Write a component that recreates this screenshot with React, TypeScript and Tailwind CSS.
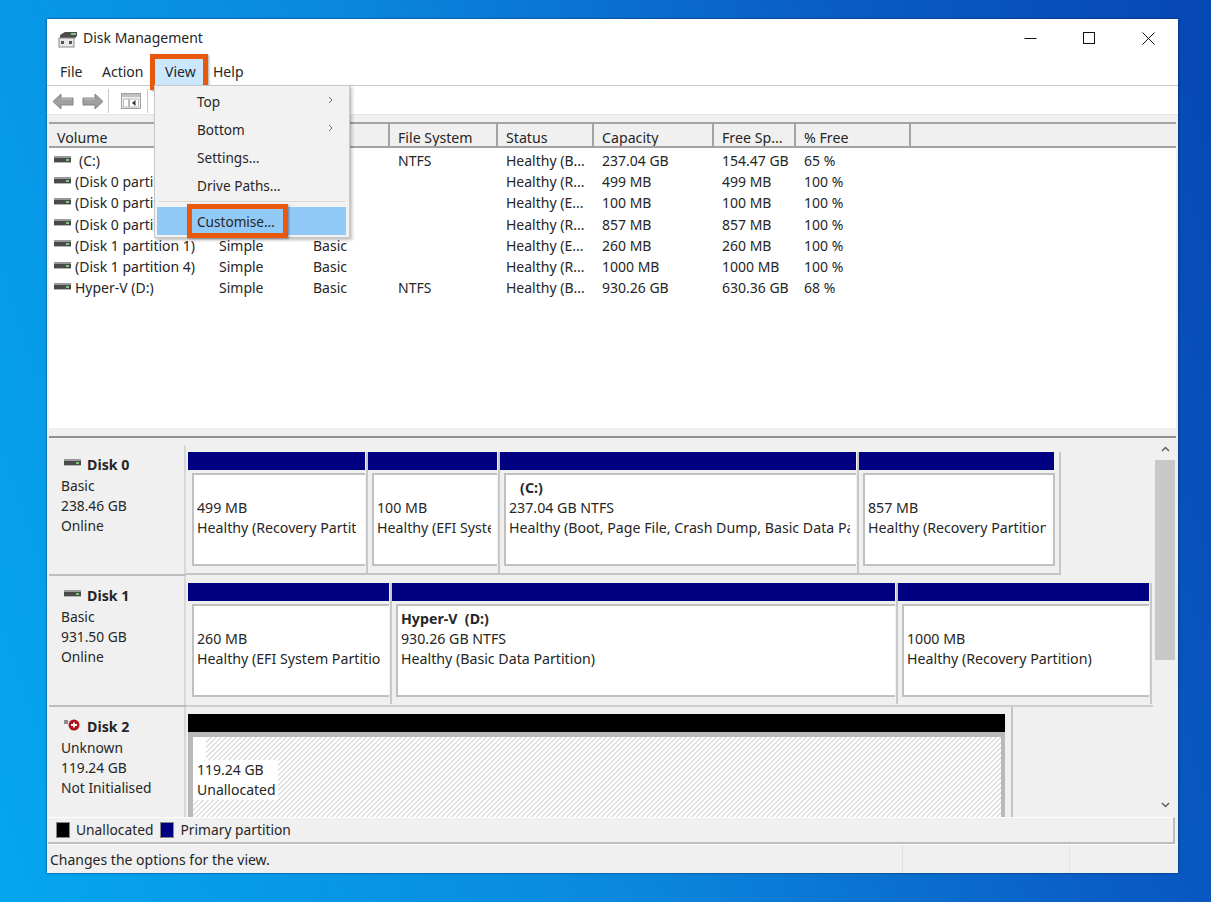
import React from "react";

const cols = "grid grid-cols-[162px_94px_85px_108px_96px_120px_82px_115px_1fr]";

const headers = ["Volume", "Layout", "Type", "File System", "Status", "Capacity", "Free Sp...", "% Free", ""];

const rows = [
  [" (C:)", "Simple", "Basic", "NTFS", "Healthy (B...", "237.04 GB", "154.47 GB", "65 %"],
  ["(Disk 0 partition 2)", "Simple", "Basic", "", "Healthy (R...", "499 MB", "499 MB", "100 %"],
  ["(Disk 0 partition 3)", "Simple", "Basic", "", "Healthy (E...", "100 MB", "100 MB", "100 %"],
  ["(Disk 0 partition 4)", "Simple", "Basic", "", "Healthy (R...", "857 MB", "857 MB", "100 %"],
  ["(Disk 1 partition 1)", "Simple", "Basic", "", "Healthy (E...", "260 MB", "260 MB", "100 %"],
  ["(Disk 1 partition 4)", "Simple", "Basic", "", "Healthy (R...", "1000 MB", "1000 MB", "100 %"],
  ["Hyper-V (D:)", "Simple", "Basic", "NTFS", "Healthy (B...", "930.26 GB", "630.36 GB", "68 %"],
];

const menuItems: { label: string; sub: boolean }[] = [
  { label: "Top", sub: true },
  { label: "Bottom", sub: true },
  { label: "Settings…", sub: false },
  { label: "Drive Paths…", sub: false },
];

function Drive({ className = "" }: { className?: string }) {
  return (
    <svg width="17" height="7" viewBox="0 0 17 7" className={className}>
      <rect x="0" y="0" width="17" height="2" fill="#9a9a9a" />
      <rect x="0" y="2" width="17" height="4" fill="#4a4a4a" />
      <rect x="0" y="6" width="17" height="1" fill="#b5b5b5" />
      <rect x="12" y="3" width="3" height="2" fill="#7fc77f" />
    </svg>
  );
}

function Partition({
  width,
  name,
  size,
  status,
  last = false,
  wide = false,
}: {
  width: string;
  name?: React.ReactNode;
  size: string;
  status: string;
  last?: boolean;
  wide?: boolean;
}) {
  return (
    <div className={`${width} h-[121px] shrink-0 flex flex-col border-r-2 border-[#c8c8c8]`}>
      <div className={`h-[18px] ${last ? "mr-[5px]" : "mr-[1px]"} bg-[#000080] shrink-0`} />
      <div
        className={`mt-[3px] ml-[4px] ${last ? "mr-[4px] border-r-2 pr-[7px]" : wide ? "mr-[1px] pr-[6px]" : "mr-[1px] pr-[9px]"} h-[93px] bg-white border-l-2 border-t-2 border-b-2 border-[#c0c0c0] pt-[3px] pl-[3px]`}
      >
        <div className="h-[20px] leading-[20px] font-bold whitespace-pre">{name}</div>
        <div className="h-[20px] leading-[20px] whitespace-nowrap overflow-hidden">{size}</div>
        <div className="h-[20px] leading-[20px] whitespace-nowrap overflow-hidden">{status}</div>
      </div>
    </div>
  );
}

function DiskLabel({
  icon,
  name,
  lines,
}: {
  icon: React.ReactNode;
  name: string;
  lines: string[];
}) {
  return (
    <div className="w-[137px] shrink-0 border-r-2 border-[#d8d8d8] pl-[12px] pt-[8px]">
      <div className="flex items-center h-[23px]">
        <div className="w-[26px] pl-[3px] flex items-center h-[14px] -mt-[4px]">{icon}</div>
        <span className="font-bold">{name}</span>
      </div>
      {lines.map((l) => (
        <div key={l} className="h-[20px] leading-[20px] text-[13.8px] whitespace-nowrap">
          {l}
        </div>
      ))}
    </div>
  );
}

export default function App() {
  return (
    <div className="w-[1211px] h-[902px] overflow-hidden pt-[19px] pl-[47px] bg-[linear-gradient(72deg,#05a6f0_0%,#0a88de_42%,#0a5cc4_75%,#0647b3_100%)] text-[14.2px] text-[#262626] [font-family:'Noto_Sans','Open_Sans',sans-serif]">
      <div className="relative w-[1131px] h-[854px] flex flex-col bg-[#f0f0f0] shadow-[0_0_2px_rgba(0,20,60,0.8)]">
        {/* Title bar */}
        <div className="h-[39px] shrink-0 bg-white flex items-center pl-[11px]">
          <svg width="20" height="18" viewBox="0 0 20 18">
            <path d="M2 5 L7 2 H19 V6 L17 8 H2 Z" fill="#4c4c4c" />
            <rect x="13" y="3" width="5" height="2" fill="#7fc77f" />
            <rect x="1" y="8" width="15" height="9" fill="#e9e9e9" stroke="#8a8a8a" />
            <rect x="3" y="11" width="3" height="3" fill="#555" />
            <rect x="11" y="11" width="3" height="3" fill="#555" />
          </svg>
          <span className="ml-[5px] -mt-[3px] text-[14px]">Disk Management</span>
          <div className="ml-auto flex items-center pr-[23px] gap-[46px] -mt-[1px]">
            <svg width="13" height="12" viewBox="0 0 13 12">
              <path d="M0.5 6.5H12.5" stroke="#111" strokeWidth="1" />
            </svg>
            <svg width="12" height="12" viewBox="0 0 12 12">
              <rect x="0.5" y="0.5" width="11" height="11" fill="none" stroke="#111" strokeWidth="1" />
            </svg>
            <svg width="13" height="13" viewBox="0 0 13 13" className="ml-[1px]">
              <path d="M0.5 0.5L12.5 12.5M12.5 0.5L0.5 12.5" stroke="#111" strokeWidth="1" />
            </svg>
          </div>
        </div>

        {/* Menu bar */}
        <div className="h-[28px] shrink-0 bg-white border-b border-[#c9c9c9] flex items-center pl-[13px] text-[14px]">
          <span className="w-[42px]">File</span>
          <span className="w-[63px]">Action</span>
          <span className="w-[48px] relative">
            <span className="absolute -left-[15px] -top-[7px] w-[58px] h-[36px] border-[5px] border-[#e8590c] bg-[#cce8ff] shadow-[1px_1px_2px_rgba(0,0,0,0.35)]" />
            <span className="relative">View</span>
          </span>
          <span>Help</span>
        </div>

        {/* Toolbar */}
        <div className="h-[28px] shrink-0 bg-white flex items-center pl-[5px] pt-[2px]">
          <svg width="22" height="17" viewBox="0 0 22 17">
            <path d="M1 8.5 L9 1 V5 H21 V12 H9 V16 Z" fill="#9f9f9f" stroke="#858585" />
            <path d="M9 6 H20" stroke="#c4c4c4" />
          </svg>
          <svg width="22" height="17" viewBox="0 0 22 17" className="ml-[8px]">
            <path d="M21 8.5 L13 1 V5 H1 V12 H13 V16 Z" fill="#9f9f9f" stroke="#858585" />
            <path d="M2 6 H13" stroke="#c4c4c4" />
          </svg>
          <div className="w-px h-[24px] bg-[#c8c8c8] ml-[4px]" />
          <svg width="20" height="16" viewBox="0 0 20 16" className="ml-[12px]">
            <rect x="0.5" y="0.5" width="19" height="15" fill="#f2f2f2" stroke="#a0a0a0" />
            <rect x="1" y="1" width="18" height="3" fill="#c0c0c0" />
            <rect x="2.5" y="6" width="5" height="8" fill="#fff" stroke="#a0a0a0" strokeWidth="0.7" />
            <rect x="8.5" y="6" width="9" height="8" fill="#fff" stroke="#a0a0a0" strokeWidth="0.7" />
            <path d="M14.5 7 L11 10 L14.5 13 Z" fill="#333" />
          </svg>
          <div className="w-px h-[24px] bg-[#c8c8c8] ml-[6px]" />
        </div>
        <div className="h-[8px] shrink-0 bg-[#f0f0f0] border-t border-[#e6e6e6]" />

        {/* Upper table */}
        <div className="mx-[2px] shrink-0 flex flex-col">
          <div className={`${cols} h-[26px] bg-[#f0f0f0] border-t-2 border-b-2 border-[#a3a3a3]`}>
            {headers.map((h, i) => (
              <div
                key={i}
                className={`${i < 8 ? "border-r-2 border-[#a3a3a3]" : ""} pl-[8px] leading-[27px] whitespace-nowrap overflow-hidden`}
              >
                {h}
              </div>
            ))}
          </div>
          <div className="h-[280px] bg-white pt-[2px] flex flex-col text-[14px]">
            {rows.map((r, i) => (
              <div key={i} className={`${cols} h-[21.2px] leading-[21px] shrink-0`}>
                <div className="flex items-center pl-[5px] whitespace-pre overflow-hidden">
                  <Drive className="shrink-0 -mt-[3px]" />
                  <span className={i === 0 ? "ml-[8px]" : "ml-[4px]"}>{r[0].trim()}</span>
                </div>
                {r.slice(1).map((c, j) => (
                  <div key={j} className="pl-[8px] whitespace-nowrap">
                    {c}
                  </div>
                ))}
              </div>
            ))}
          </div>
          <div className="h-[10px] bg-[#efefef] border-b-2 border-[#8f8f8f]" />
        </div>

        {/* Disks panel */}
        <div className="h-[379px] shrink-0 flex pl-[2px] pr-[3px] overflow-hidden">
          <div className="w-[1106px] shrink-0 flex flex-col pt-[7px]">
            {/* Disk 0 */}
            <div className="h-[131px] shrink-0 flex">
              <div className="flex border-b-2 border-[#bdbdbd]">
                <DiskLabel
                  icon={<Drive />}
                  name="Disk 0"
                  lines={["Basic", "238.46 GB", "Online"]}
                />
              </div>
              <div className="flex pt-[7px] pl-[2px] self-start h-[130px] border-b-2 border-[#c4c4c4]">
                <Partition width="w-[180px]" size="499 MB" status="Healthy (Recovery Partition)" />
                <Partition width="w-[132px]" size="100 MB" status="Healthy (EFI System Partition)" wide />
                <Partition
                  width="w-[359px]"
                  name={"   (C:)"}
                  size="237.04 GB NTFS"
                  status="Healthy (Boot, Page File, Crash Dump, Basic Data Partition)"
                  wide
                />
                <Partition width="w-[202px]" size="857 MB" status="Healthy (Recovery Partition)" last />
              </div>
            </div>
            {/* Disk 1 */}
            <div className="h-[131px] shrink-0 flex">
              <div className="flex border-b-2 border-[#bdbdbd]">
                <DiskLabel
                  icon={<Drive />}
                  name="Disk 1"
                  lines={["Basic", "931.50 GB", "Online"]}
                />
              </div>
              <div className="flex pt-[7px] pl-[2px] w-[967px] border-b-2 border-[#cfcfcf]">
                <Partition width="w-[204px]" size="260 MB" status="Healthy (EFI System Partition)" />
                <Partition
                  width="w-[506px]"
                  name={"Hyper-V  (D:)"}
                  size="930.26 GB NTFS"
                  status="Healthy (Basic Data Partition)"
                />
                <Partition width="w-[254px]" size="1000 MB" status="Healthy (Recovery Partition)" />
              </div>
            </div>
            {/* Disk 2 */}
            <div className="flex-1 min-h-0 flex">
              <DiskLabel
                icon={
                  <svg width="17" height="14" viewBox="0 0 17 14">
                    <rect x="0" y="2" width="4" height="4" fill="#8a8a8a" />
                    <circle cx="10" cy="7" r="5.5" fill="#b3121d" />
                    <path d="M7 7H13M10 4.5V9.5" stroke="#fff" strokeWidth="1.8" />
                  </svg>
                }
                name="Disk 2"
                lines={["Unknown", "119.24 GB", "Not Initialised"]}
              />
              <div className="w-[827px] pt-[7px] pl-[2px] border-r-2 border-[#c4c4c4] pr-[6px] flex flex-col">
                <div className="h-[18px] bg-black shrink-0" />
                <div className="flex-1 border-t-[5px] border-l-[5px] border-r-[4px] border-[#b9b9b9] bg-[repeating-linear-gradient(135deg,#ffffff_0,#ffffff_1.6px,#dcdcdc_2.2px,#dcdcdc_3px,#ffffff_3.5355px)]">
                  <div className="w-[13px] h-[23px] bg-white" />
                  <div className="w-fit bg-white pl-[4px] pr-[2px] text-[14px]">
                    <div className="h-[20px] leading-[20px] whitespace-nowrap">119.24 GB</div>
                    <div className="h-[20px] leading-[20px] whitespace-nowrap">Unallocated</div>
                  </div>
                </div>
              </div>
            </div>
          </div>
          {/* Scrollbar */}
          <div className="w-[20px] shrink-0 flex flex-col items-center bg-[#f0f0f0]">
            <div className="h-[22px] w-full flex items-center justify-center">
              <svg width="9" height="6" viewBox="0 0 9 6">
                <path d="M1 5L4.5 1.5L8 5" fill="none" stroke="#606060" strokeWidth="1.5" />
              </svg>
            </div>
            <div className="h-[200px] w-full bg-[#c8c8c8]" />
            <div className="flex-1" />
            <div className="h-[22px] w-full flex items-center justify-center pb-[2px]">
              <svg width="9" height="6" viewBox="0 0 9 6">
                <path d="M1 1L4.5 4.5L8 1" fill="none" stroke="#606060" strokeWidth="1.5" />
              </svg>
            </div>
          </div>
        </div>

        {/* Legend */}
        <div className="h-[27px] shrink-0 mr-[3px] ml-[1px] pl-[8px] border-b-2 border-r-2 border-[#bdbdbd] border-t border-t-white flex items-center bg-[#f0f0f0] text-[13.8px]">
          <span className="w-[14px] h-[16px] bg-black border border-[#888]" />
          <span className="ml-[6px] mt-[1px]">Unallocated</span>
          <span className="ml-[7px] w-[14px] h-[16px] bg-[#000080] border border-[#888]" />
          <span className="ml-[6px] mt-[1px]">Primary partition</span>
        </div>

        {/* Status bar */}
        <div className="flex-1 grid grid-cols-[855px_167px_1fr] items-stretch border-t border-white text-[14px]">
          <div className="pl-[3px] pt-[1px] flex items-center">Changes the options for the view.</div>
          <div className="border-l border-[#e2e2e2]" />
          <div className="border-l border-[#e2e2e2]" />
        </div>

        {/* View menu */}
        <div className="absolute left-[107px] top-[66px] w-[196px] h-[153px] bg-[#f2f2f2] border border-[#c8c8c8] shadow-[2px_2px_3px_rgba(0,0,0,0.25)] p-[2px] flex flex-col text-[13.6px]">
          {menuItems.map(({ label, sub }) => (
            <div key={label} className="h-[27.8px] shrink-0 pl-[40px] pr-[14px] pt-[1px] flex items-center justify-between">
              <span>{label}</span>
              {sub ? (
                <svg width="5" height="8" viewBox="0 0 5 8" className="-mt-[4px]">
                  <path d="M1 1L4 4L1 7" fill="none" stroke="#707070" strokeWidth="1" />
                </svg>
              ) : null}
            </div>
          ))}
          <div className="h-px bg-[#d8d8d8] mt-[2px] mb-[5px] mx-[2px] shrink-0" />
          <div className="h-[28px] shrink-0 mr-[1px] bg-[#91c9f7] pl-[40px] pt-[2px] flex items-center relative">
            <span className="absolute left-[30px] -top-[3px] w-[101px] h-[34px] border-[5px] border-[#e8590c] shadow-[1px_1px_2px_rgba(0,0,0,0.35)]" />
            <span className="relative">Customise…</span>
          </div>
        </div>
      </div>
    </div>
  );
}
